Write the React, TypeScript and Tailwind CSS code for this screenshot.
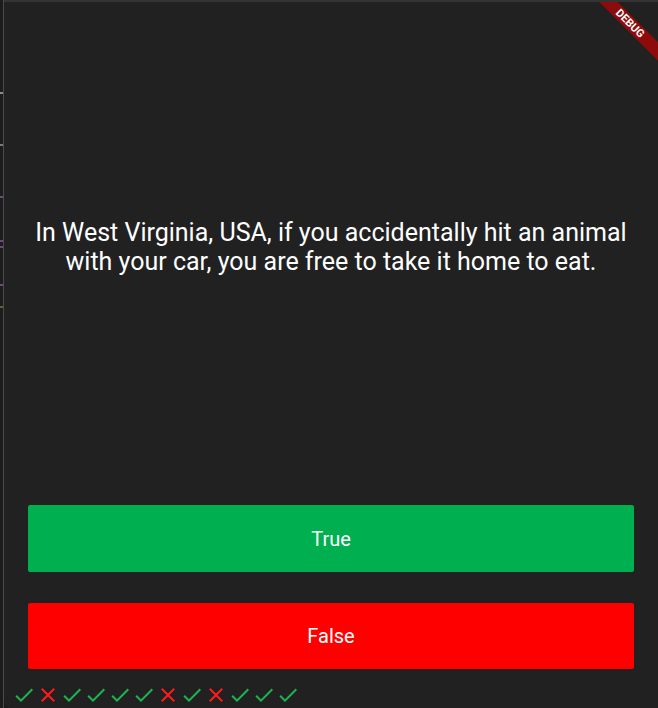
import React from "react";

const CHECK = "M9 16.17L4.83 12l-1.42 1.41L9 19 21 7l-1.41-1.41z";
const CLOSE =
  "M19 6.41L17.59 5 12 10.59 6.41 5 5 6.41 10.59 12 5 17.59 6.41 19 12 13.41 17.59 19 19 17.59 13.41 12z";

const scores = [true, false, true, true, true, true, false, true, false, true, true, true];

export default function App() {
  return (
    <div
      className="w-[658px] h-[708px] flex bg-[#1b1b1b] overflow-hidden"
      style={{ fontFamily: "Roboto, 'Noto Sans', sans-serif" }}
    >
      <div className="w-[3px] h-full flex flex-col bg-[#1c1c1c]">
        <div className="h-[92px]" />
        <div className="h-[2px] w-[3px] bg-[#8a8a8a]" />
        <div className="h-[50px]" />
        <div className="h-[2px] w-[3px] bg-[#7a7a7a]" />
        <div className="h-[50px]" />
        <div className="h-[2px] w-[3px] bg-[#6e4a7a]" />
        <div className="h-[42px]" />
        <div className="h-[2px] w-[3px] bg-[#6e4a7a]" />
        <div className="h-[4px]" />
        <div className="h-[2px] w-[3px] bg-[#6e4a7a]" />
        <div className="h-[36px]" />
        <div className="h-[2px] w-[3px] bg-[#6e4a7a]" />
        <div className="h-[20px]" />
        <div className="h-[2px] w-[3px] bg-[#4a6a3a]" />
      </div>
      <div className="w-px h-full bg-[#4b4b4b]" />
      <div className="relative flex-1 flex flex-col bg-[#212121] border-t-2 border-[#343434] rounded-bl-[8px] overflow-hidden">
        <div className="flex-1 flex items-center justify-center px-[20px]">
          <p className="text-white text-center text-[25px] leading-[29px]">
            In West Virginia, USA, if you accidentally hit an animal with your car, you are free to take it home to eat.
          </p>
        </div>
        <div className="px-6 pt-[14px] flex flex-col gap-[31px]">
          <button className="h-[67px] w-full bg-[#00b050] rounded-[2px] text-white text-[20px]">
            True
          </button>
          <button className="h-[66px] w-full bg-[#ff0000] rounded-[2px] text-white text-[20px]">
            False
          </button>
        </div>
        <div className="h-[39px] flex items-end pl-2 pb-[1px]">
          {scores.map((ok, i) => (
            <svg key={i} width="24" height="24" viewBox="0 0 24 24" className="shrink-0">
              <path d={ok ? CHECK : CLOSE} fill={ok ? "#1db34f" : "#ff1a1a"} />
            </svg>
          ))}
        </div>
        <div className="absolute top-0 right-0 w-[80px] h-[80px] overflow-hidden pointer-events-none">
          <div className="absolute top-[15px] right-[-27px] w-[110px] h-[13px] bg-[#8e0b0b] rotate-45 flex items-center justify-center">
            <span className="text-white text-[11px] font-bold leading-none">DEBUG</span>
          </div>
        </div>
      </div>
    </div>
  );
}
